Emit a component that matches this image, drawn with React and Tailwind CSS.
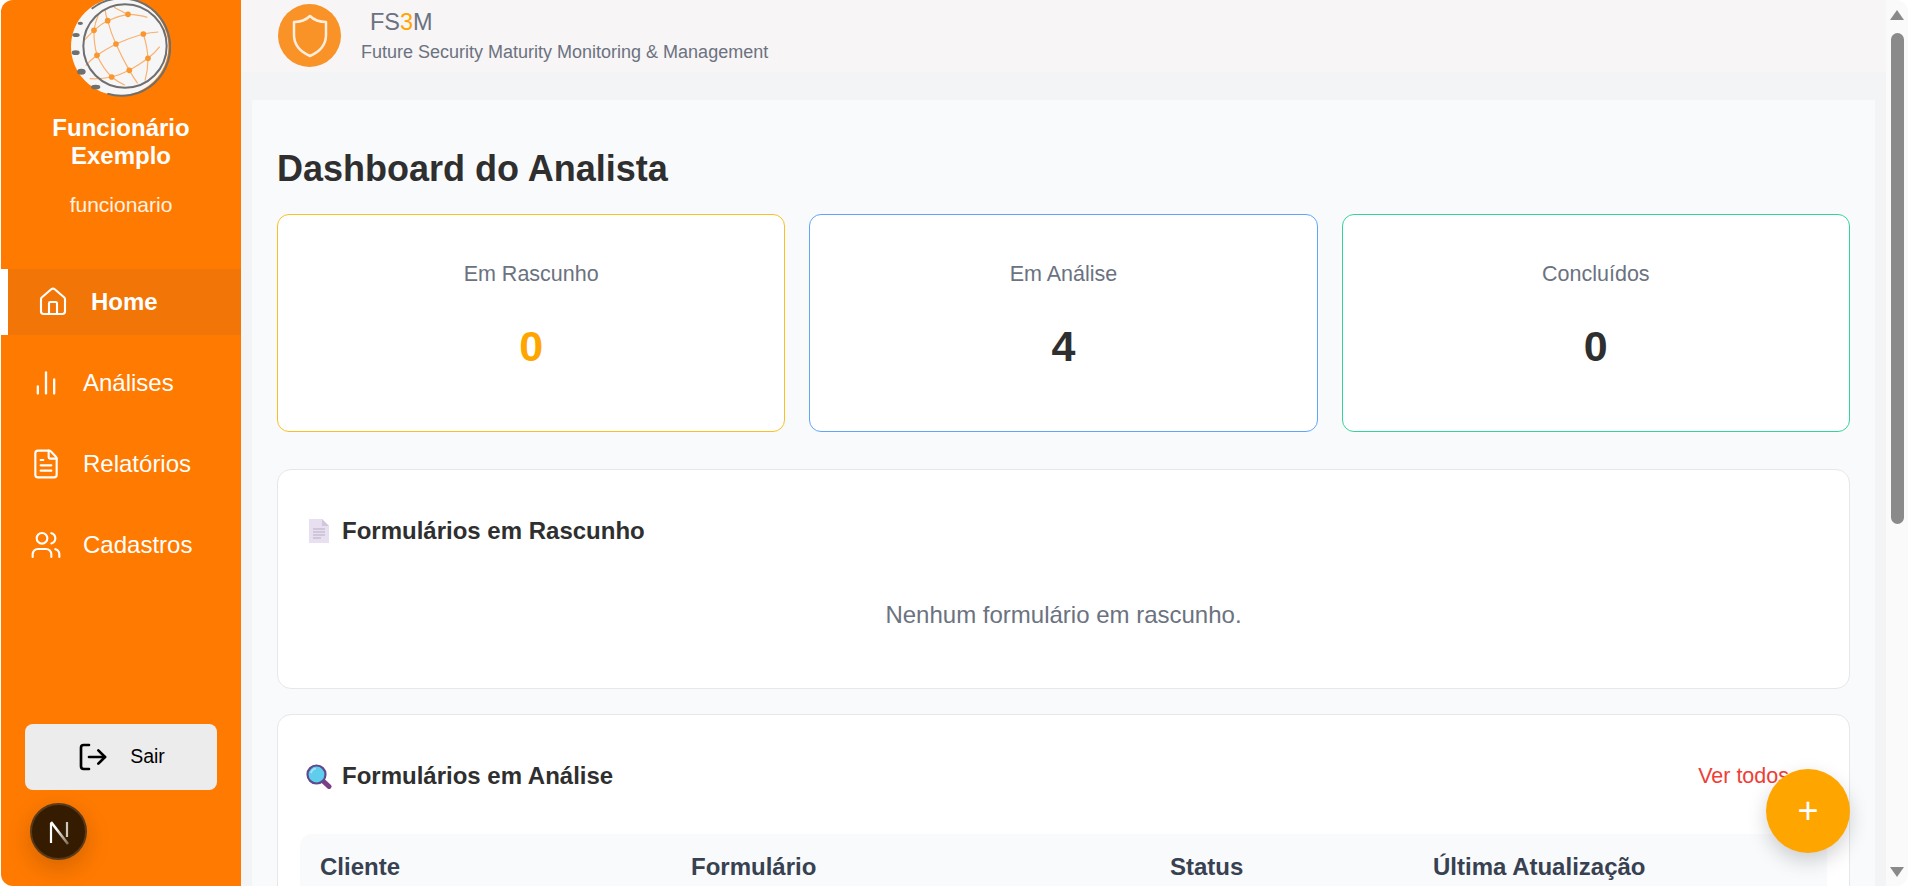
import React from 'react';
import { House, ChartNoAxesColumn, FileText, Users, LogOut } from 'lucide-react';

const font = { fontFamily: '"Liberation Sans", Arial, sans-serif' };

const nodes = [
  [267, 43], [206, 62], [165, 91], [313, 102], [231, 132],
  [174, 166], [327, 175], [271, 211], [218, 231],
];

function GlobeLogo() {
  return (
    <svg width="102" height="100" viewBox="90 -6 306 300" className="-mt-[2px] -ml-[3px] shrink-0">
      <circle cx="242" cy="140" r="146" fill="#f6f6f6" />
      <g fill="none" stroke="#f9b070" strokeWidth="3.5">
        <path d="M225 22 Q250 36 267 43 Q300 44 325 52" />
        <path d="M135 122 Q150 105 165 91 Q185 72 206 62 Q235 48 267 43" />
        <path d="M198 28 Q200 45 206 62 Q216 100 231 132 Q250 175 271 211 Q283 232 296 250" />
        <path d="M178 45 Q168 68 165 91 Q164 130 174 166 Q192 205 218 231 Q235 245 258 256" />
        <path d="M140 197 Q155 180 174 166 Q200 148 231 132 Q270 114 313 102 Q335 98 358 96" />
        <path d="M313 102 Q325 140 327 175 Q327 210 318 242" />
        <path d="M362 140 Q347 160 327 175 Q300 195 271 211 Q245 224 218 231 Q185 238 152 236" />
      </g>
      {nodes.map(([x, y]) => (
        <circle key={x} cx={x} cy={y} r="8.5" fill="#f9962e" />
      ))}
      <circle cx="258" cy="138" r="125" fill="none" stroke="#6f6f6f" strokeWidth="6" />
      <path d="M158 26 A146 146 0 1 1 205 281" fill="none" stroke="#6f6f6f" strokeWidth="6" />
      <g fill="#6f6f6f">
        <ellipse cx="124" cy="70" rx="8" ry="5" />
        <ellipse cx="111" cy="105" rx="11" ry="6" />
        <ellipse cx="110" cy="158" rx="12" ry="7" />
        <ellipse cx="127" cy="215" rx="13" ry="9" />
        <ellipse cx="170" cy="261" rx="14" ry="7" />
      </g>
    </svg>
  );
}

function NavItem({ icon: Icon, label, active, iconSize = 32 }) {
  if (active) {
    return (
      <div className="flex h-[66px] items-center border-l-[7px] border-white bg-[#f27507] pl-[29px] text-[24px] font-bold text-white">
        <Icon size={iconSize} strokeWidth={1.6} />
        <span className="ml-[22px]">{label}</span>
      </div>
    );
  }
  return (
    <div className="flex h-[66px] items-center pl-[29px] text-[24px] text-white">
      <span className="flex w-[32px] justify-center">
        <Icon size={iconSize} strokeWidth={iconSize === 32 ? 1.6 : 2} />
      </span>
      <span className="ml-[21px]">{label}</span>
    </div>
  );
}

function Sidebar() {
  return (
    <aside className="flex h-[886px] w-[240px] shrink-0 flex-col rounded-l-[12px] bg-[#ff7a00]">
      <div className="flex flex-col items-center">
        <GlobeLogo />
        <h2 className="mt-[16px] w-[200px] text-center text-[24px] leading-[28px] font-bold text-white">
          Funcionário Exemplo
        </h2>
        <p className="mt-[23px] text-[21px] leading-[24px] text-white/90">funcionario</p>
      </div>
      <nav className="mt-[52px] flex flex-col gap-[15px]">
        <NavItem icon={House} label="Home" active />
        <NavItem icon={ChartNoAxesColumn} label="Análises" iconSize={28} />
        <NavItem icon={FileText} label="Relatórios" />
        <NavItem icon={Users} label="Cadastros" />
      </nav>
      <div className="mx-[24px] mt-auto mb-[96px] flex h-[66px] items-center justify-center gap-[21px] rounded-[8px] bg-[#ececec] text-[19.5px] text-black">
        <LogOut size={32} strokeWidth={2} />
        <span>Sair</span>
      </div>
    </aside>
  );
}

function ShieldBadge() {
  return (
    <div className="flex h-[63px] w-[63px] shrink-0 items-center justify-center rounded-full bg-[#f99227]">
      <svg width="36" height="44" viewBox="0 0 36 44" fill="none" stroke="#fdeedd" strokeWidth="2.5" strokeLinejoin="round">
        <path d="M18 2 C22 6 27 8 34 8 V21 C34 31 27 38 18 42 C9 38 2 31 2 21 V8 C9 8 14 6 18 2 Z" />
      </svg>
    </div>
  );
}

function DocEmoji() {
  return (
    <svg width="20" height="24" viewBox="0 0 20 24" className="shrink-0">
      <path d="M0 0 H13 L20 7 V24 H0 Z" fill="#e8dff0" />
      <path d="M13 0 L20 7 H13 Z" fill="#d2c6dc" />
      <path d="M4 10 H16 M4 13 H16 M4 16 H16 M4 19 H12" stroke="#b9adc4" strokeWidth="1" />
    </svg>
  );
}

function SearchEmoji() {
  return (
    <svg width="26" height="25" viewBox="0 0 26 25" className="shrink-0">
      <path d="M16 16 L23 22.5" stroke="#7b3f87" strokeWidth="5" strokeLinecap="round" />
      <circle cx="10.5" cy="10.5" r="9" fill="#5fcdec" stroke="#5f4a8e" strokeWidth="2.2" />
      <path d="M5 9 A6 6 0 0 1 10 4.5" fill="none" stroke="#a8e6f7" strokeWidth="1.6" />
    </svg>
  );
}

function StatCard({ label, value, border, color }) {
  return (
    <div className={`flex h-[218px] flex-col items-center rounded-[12px] border bg-white ${border}`}>
      <span className="mt-[46px] text-[21.5px] leading-[26px] text-[#6b7280]">{label}</span>
      <span className={`mt-[34px] text-[43px] leading-[50px] font-bold ${color}`}>{value}</span>
    </div>
  );
}

function App() {
  return (
    <div className="relative flex h-[886px] overflow-hidden bg-white pl-px pr-[6px]" style={font}>
      <Sidebar />

      <main className="flex min-w-0 flex-1 flex-col overflow-hidden bg-[#f3f4f6]">
        <header className="flex h-[72px] shrink-0 items-start bg-[#f7f5f6] pt-[4px] pl-[37px]">
          <ShieldBadge />
          <div className="ml-[20px] text-[#6b7280]">
            <div className="ml-[9px] h-[37px] text-[23.5px] leading-[36px]">
              FS<span className="text-[#ffa500]">3</span>M
            </div>
            <div className="text-[18px] leading-[22px]">Future Security Maturity Monitoring &amp; Management</div>
          </div>
        </header>

        <div className="mx-[11px] mt-[28px] flex-1 bg-[#f9fafb] px-[25px] pt-[45px]">
          <h1 className="text-[36px] leading-[48px] font-bold text-[#2f2f2f]">Dashboard do Analista</h1>

          <div className="mt-[21px] grid grid-cols-3 gap-[24px]">
            <StatCard label="Em Rascunho" value="0" border="border-[#fbbf24]" color="text-[#ffa500]" />
            <StatCard label="Em Análise" value="4" border="border-[#60a5fa]" color="text-[#2f2f2f]" />
            <StatCard label="Concluídos" value="0" border="border-[#34d399]" color="text-[#2f2f2f]" />
          </div>

          <section className="mt-[37px] h-[220px] rounded-[14px] border border-[#e5e7eb] bg-white px-[31px] pt-[46px]">
            <div className="flex h-[30px] items-center gap-[13px]">
              <DocEmoji />
              <h3 className="text-[24px] font-bold text-[#2f2f2f]">Formulários em Rascunho</h3>
            </div>
            <p className="mt-[54px] text-center text-[24px] leading-[30px] text-[#6b7280]">Nenhum formulário em rascunho.</p>
          </section>

          <section className="mt-[25px] rounded-[14px] border border-[#e5e7eb] bg-white px-[22px] pt-[46px] pb-[40px]">
            <div className="flex h-[30px] items-center justify-between pr-[38px] pl-[6px]">
              <div className="flex items-center gap-[10px]">
                <SearchEmoji />
                <h3 className="text-[24px] font-bold text-[#2f2f2f]">Formulários em Análise</h3>
              </div>
              <span className="text-[21.5px] text-[#ef3e36]">Ver todos</span>
            </div>
            <div className="mt-[43px] grid grid-cols-[371px_479px_263px_1fr] rounded-t-[12px] bg-[#f9fafb] px-[20px] pt-[16px] pb-[20px] text-[24px] leading-[34px] font-bold text-[#374151]">
              <span>Cliente</span>
              <span>Formulário</span>
              <span>Status</span>
              <span>Última Atualização</span>
            </div>
          </section>
        </div>
      </main>

      {/* fake browser scrollbar */}
      <div className="flex h-[886px] w-[22px] shrink-0 flex-col items-center rounded-r-[12px] bg-[#fafafa]">
        <div className="mt-[10px] h-0 w-0 border-x-[7px] border-b-[10px] border-x-transparent border-b-[#8a8a8a]" />
        <div className="mt-[13px] h-[491px] w-[13px] rounded-full bg-[#8a8a8a]" />
        <div className="mt-auto mb-[9px] h-0 w-0 border-x-[7px] border-t-[10px] border-x-transparent border-t-[#8a8a8a]" />
      </div>

      {/* dev indicator */}
      <div className="absolute top-[803px] left-[30px] flex h-[57px] w-[57px] items-center justify-center rounded-full border-2 border-[#5a3a1a] bg-[#351c00] shadow-[0_8px_24px_rgba(0,0,0,0.18)]">
        <svg width="24" height="26" viewBox="0 0 24 26" fill="none">
          <defs>
            <linearGradient id="nfade" x1="0" y1="0" x2="1" y2="1">
              <stop offset="0.3" stopColor="#ffffff" />
              <stop offset="1" stopColor="#ffffff" stopOpacity="0.35" />
            </linearGradient>
          </defs>
          <path d="M4 4 V24" stroke="#ffffff" strokeWidth="2.2" />
          <path d="M4 3 L21 25" stroke="url(#nfade)" strokeWidth="2.6" />
          <path d="M20 3 V18" stroke="#ffffff" strokeOpacity="0.75" strokeWidth="2.2" />
        </svg>
      </div>

      {/* floating add button */}
      <button className="absolute top-[769px] left-[1766px] flex h-[84px] w-[84px] items-center justify-center rounded-full bg-[#ffa500] text-[36px] leading-none text-white shadow-[0_8px_20px_rgba(0,0,0,0.18)]">
        +
      </button>
    </div>
  );
}

export default App;
